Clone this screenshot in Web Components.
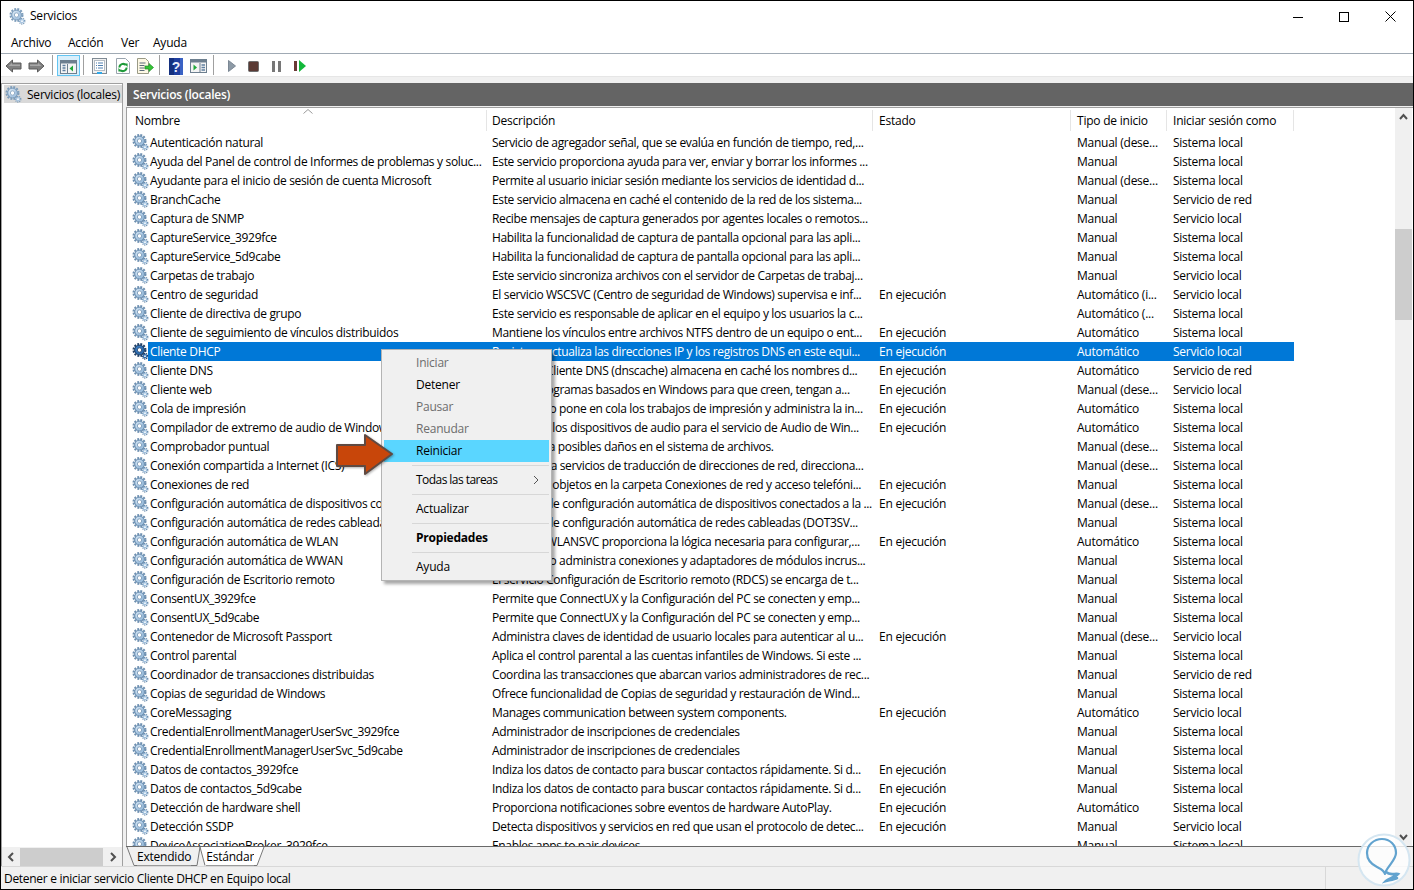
<!DOCTYPE html>
<html lang="es">
<head>
<meta charset="utf-8">
<title>Servicios</title>
<style>
html,body{margin:0;padding:0;background:#fff;}
body{font-family:"Open Sans","Noto Sans",sans-serif;font-size:12px;color:#000;}
</style>
</head>
<body>
<svc-window>
  <svc-titlebar slot="title">Servicios</svc-titlebar>
  <svc-menubar slot="menu"></svc-menubar>
  <svc-toolbar slot="tools"></svc-toolbar>
  <svc-tree slot="tree"></svc-tree>
  <svc-list slot="list"></svc-list>
  <svc-status slot="status">Detener e iniciar servicio Cliente DHCP en Equipo local</svc-status>
  <svc-context slot="over"></svc-context>
  <svc-watermark slot="over"></svc-watermark>
</svc-window>

<script>
//shared font rule, each shadow root needs its own copy
const BASE = `font-family:"Open Sans","Noto Sans",sans-serif;font-size:12px;letter-spacing:-0.22px;color:#000;`;

//the gear used by every service, 3 colour sets
function gear(light, mid, dark){
  return `<svg width="17" height="17" viewBox="0 0 17 17" style="display:block">
    <circle cx="7.5" cy="7" r="5.9" fill="none" stroke="${dark}" stroke-width="2.2" stroke-dasharray="1.9 1.2"/>
    <circle cx="7.5" cy="7" r="4.9" fill="${mid}" stroke="${dark}" stroke-width="1"/>
    <circle cx="6.8" cy="6.3" r="3.2" fill="${light}" opacity=".75"/>
    <circle cx="7.5" cy="7" r="2.2" fill="#fff" stroke="${dark}" stroke-width=".8"/>
    <circle cx="13" cy="13.2" r="2.7" fill="none" stroke="${dark}" stroke-width="1.5" stroke-dasharray="1.1 .8"/>
    <circle cx="13" cy="13.2" r="2.1" fill="${mid}"/>
    <circle cx="13" cy="13.2" r=".9" fill="#fff"/>
  </svg>`;
}
const GEAR = gear("#d3e4f3","#9fc0de","#6d8fb0");
const GEAR_PALE = gear("#dbe8f4","#a9c6e2","#7d9dbb");
const GEAR_SELECTED = gear("#3f7fc4","#2a6aad","#1f3f66");

//all the toolbar icons
const TOOL_ICONS = {
  back:`<svg width="17" height="14" viewBox="0 0 17 14"><path d="M1 7 7.5 1V4H16V10H7.5V13Z" fill="#808080" stroke="#5a5a5a"/><path d="M3.5 7 7 4V5.5H15V7Z" fill="#a8a8a8"/></svg>`,
  forward:`<svg width="17" height="14" viewBox="0 0 17 14"><path d="M16 7 9.5 1V4H1V10H9.5V13Z" fill="#808080" stroke="#5a5a5a"/><path d="M13.5 7 10 4V5.5H2V7Z" fill="#a8a8a8"/></svg>`,
  tree:`<svg width="17" height="14" viewBox="0 0 17 14"><rect x=".5" y=".5" width="16" height="13" fill="#f4f4f4" stroke="#6d7f8f"/><rect x="1" y="1" width="15" height="2.5" fill="#6d7f8f"/><path d="M2.5 5.5h3M2.5 8h3M2.5 10.5h3" stroke="#5f7f9f" stroke-width="1.4"/><path d="M7.5 4v9" stroke="#6d7f8f"/><path d="M13 5.5v6L9.5 8.5Z" fill="#1fa83a"/></svg>`,
  doc:`<svg width="15" height="16" viewBox="0 0 15 16"><rect x=".5" y=".5" width="14" height="15" fill="#f1f1f1" stroke="#7f8a94"/><rect x="2.5" y="2.5" width="10" height="10" fill="#fff" stroke="#b4bcc4"/><path d="M4 5h1M6 5h5M4 7.5h1M6 7.5h5M4 10h1M6 10h5" stroke="#4f7fb0"/><rect x="5" y="14" width="5" height="2" fill="#2ea7e8"/></svg>`,
  refresh:`<svg width="14" height="16" viewBox="0 0 14 16"><path d="M.5.5h9l4 4v11H.5Z" fill="#fff" stroke="#9aa4ae"/><path d="M3.4 9.5a3.7 3.7 0 0 1 6.4-2.4M10.6 9.5a3.7 3.7 0 0 1-6.4 2.4" fill="none" stroke="#1f9a3a" stroke-width="2"/><path d="M8 5.5h3.6v3.6ZM6 13.5H2.4V9.9Z" fill="#1f9a3a"/></svg>`,
  export:`<svg width="17" height="16" viewBox="0 0 17 16"><path d="M.5.5h8l3 3v12H.5Z" fill="#fdf8e4" stroke="#9a9a86"/><path d="M2.5 5h6M2.5 7.5h5M2.5 10h5M2.5 12.5h5" stroke="#5a6a7a"/><path d="M16.5 9.5 12 5.5V8H8v3h4v2.5Z" fill="#35c435" stroke="#1f8f2a" stroke-width=".7"/></svg>`,
  help:`<svg width="14" height="17" viewBox="0 0 14 17"><rect width="14" height="17" fill="#1f3f9f"/><rect width="5" height="17" fill="#14307f"/><rect x="11" width="3" height="17" fill="#3a62c4"/><text x="7" y="13.5" text-anchor="middle" font-family="Liberation Sans,sans-serif" font-weight="700" font-size="14" fill="#e8eefc">?</text></svg>`,
  console:`<svg width="17" height="14" viewBox="0 0 17 14"><rect x=".5" y=".5" width="16" height="13" fill="#f4f4f4" stroke="#6d7f8f"/><rect x="1" y="1" width="15" height="2.5" fill="#6d7f8f"/><path d="M3.5 5.5v6L7 8.5Z" fill="#1fa83a"/><path d="M10 4v9" stroke="#6d7f8f"/><path d="M11.5 6h3.5M11.5 8.5h3.5M11.5 11h3.5" stroke="#5f7f9f" stroke-width="1.4"/></svg>`,
  play:`<svg width="8" height="12" viewBox="0 0 8 12"><path d="M.5.5 7.5 6 .5 11.5Z" fill="#8d9aa6" stroke="#7b8794"/></svg>`,
  stop:`<svg width="11" height="11" viewBox="0 0 11 11"><rect x=".5" y=".5" width="10" height="10" rx="1" fill="#5a3a34" stroke="#6d6d6d"/></svg>`,
  pause:`<svg width="9" height="11" viewBox="0 0 9 11"><rect width="3" height="11" fill="#777"/><rect x="6" width="3" height="11" fill="#777"/></svg>`,
  resume:`<svg width="12" height="12" viewBox="0 0 12 12"><rect y="1" width="3" height="10" fill="#6a3a36"/><path d="M5 0 12 6 5 12Z" fill="#12b83a"/></svg>`
};

//the table content, text is cut by hand as the real list cuts it
const I = "En ejecución", MD = "Manual (dese...", M = "Manual", A = "Automático", SL = "Sistema local", VL = "Servicio local", VR = "Servicio de red";
const ROWS = [
["Autenticación natural","Servicio de agregador señal, que se evalúa en función de tiempo, red,...","",MD,SL],
["Ayuda del Panel de control de Informes de problemas y soluc...","Este servicio proporciona ayuda para ver, enviar y borrar los informes ...","",M,SL],
["Ayudante para el inicio de sesión de cuenta Microsoft","Permite al usuario iniciar sesión mediante los servicios de identidad d...","",MD,SL],
["BranchCache","Este servicio almacena en caché el contenido de la red de los sistema...","",M,VR],
["Captura de SNMP","Recibe mensajes de captura generados por agentes locales o remotos...","",M,VL],
["CaptureService_3929fce","Habilita la funcionalidad de captura de pantalla opcional para las apli...","",M,SL],
["CaptureService_5d9cabe","Habilita la funcionalidad de captura de pantalla opcional para las apli...","",M,SL],
["Carpetas de trabajo","Este servicio sincroniza archivos con el servidor de Carpetas de trabaj...","",M,VL],
["Centro de seguridad","El servicio WSCSVC (Centro de seguridad de Windows) supervisa e inf...",I,"Automático (i...",VL],
["Cliente de directiva de grupo","Este servicio es responsable de aplicar en el equipo y los usuarios la c...","","Automático (...",SL],
["Cliente de seguimiento de vínculos distribuidos","Mantiene los vínculos entre archivos NTFS dentro de un equipo o ent...",I,A,SL],
["Cliente DHCP","Registra y actualiza las direcciones IP y los registros DNS en este equi...",I,A,VL],
["Cliente DNS","El servicio Cliente DNS (dnscache) almacena en caché los nombres d...",I,A,VR],
["Cliente web","Habilita programas basados en Windows para que creen, tengan a...",I,MD,VL],
["Cola de impresión","Este servicio pone en cola los trabajos de impresión y administra la in...",I,A,SL],
["Compilador de extremo de audio de Windows","Administra los dispositivos de audio para el servicio de Audio de Win...",I,A,SL],
["Comprobador puntual","Comprueba posibles daños en el sistema de archivos.","",MD,SL],
["Conexión compartida a Internet (ICS)","Proporciona servicios de traducción de direcciones de red, direcciona...","",MD,SL],
["Conexiones de red","Administra objetos en la carpeta Conexiones de red y acceso telefóni...",I,M,SL],
["Configuración automática de dispositivos conectados","El servicio de configuración automática de dispositivos conectados a la ...",I,MD,SL],
["Configuración automática de redes cableadas","El servicio de configuración automática de redes cableadas (DOT3SV...","",M,SL],
["Configuración automática de WLAN","El servicio WLANSVC proporciona la lógica necesaria para configurar,...",I,A,SL],
["Configuración automática de WWAN","Este servicio administra conexiones y adaptadores de módulos incrus...","",M,SL],
["Configuración de Escritorio remoto","El servicio Configuración de Escritorio remoto (RDCS) se encarga de t...","",M,SL],
["ConsentUX_3929fce","Permite que ConnectUX y la Configuración del PC se conecten y emp...","",M,SL],
["ConsentUX_5d9cabe","Permite que ConnectUX y la Configuración del PC se conecten y emp...","",M,SL],
["Contenedor de Microsoft Passport","Administra claves de identidad de usuario locales para autenticar al u...",I,MD,VL],
["Control parental","Aplica el control parental a las cuentas infantiles de Windows. Si este ...","",M,SL],
["Coordinador de transacciones distribuidas","Coordina las transacciones que abarcan varios administradores de rec...","",M,VR],
["Copias de seguridad de Windows","Ofrece funcionalidad de Copias de seguridad y restauración de Wind...","",M,SL],
["CoreMessaging","Manages communication between system components.",I,A,VL],
["CredentialEnrollmentManagerUserSvc_3929fce","Administrador de inscripciones de credenciales","",M,SL],
["CredentialEnrollmentManagerUserSvc_5d9cabe","Administrador de inscripciones de credenciales","",M,SL],
["Datos de contactos_3929fce","Indiza los datos de contacto para buscar contactos rápidamente. Si d...",I,M,SL],
["Datos de contactos_5d9cabe","Indiza los datos de contacto para buscar contactos rápidamente. Si d...",I,M,SL],
["Detección de hardware shell","Proporciona notificaciones sobre eventos de hardware AutoPlay.",I,A,SL],
["Detección SSDP","Detecta dispositivos y servicios en red que usan el protocolo de detec...",I,M,VL],
["DeviceAssociationBroker_3929fce","Enables apps to pair devices","",M,SL]
];

//MAIN WINDOW
class SvcWindow extends HTMLElement {
  constructor(){
    super();
    this.attachShadow({mode:"open"}).innerHTML = `
    <style>
      :host{display:block;position:relative;width:1414px;height:890px;box-sizing:border-box;border:1px solid #000;background:#fff;overflow:hidden;${BASE}}
      .frame{display:flex;flex-direction:column;height:100%;}
      .console{flex:1;height:0;min-height:0;display:grid;grid-template-columns:122px 1fr;column-gap:3px;background:#f0f0f0;padding-top:6px;border-top:1px solid #e6e6e6;}
    </style>
    <div class="frame">
      <slot name="title"></slot>
      <slot name="menu"></slot>
      <slot name="tools"></slot>
      <div class="console">
        <slot name="tree"></slot>
        <slot name="list"></slot>
      </div>
      <slot name="status"></slot>
    </div>
    <slot name="over"></slot>`;
  }
}

class SvcTitlebar extends HTMLElement {
  constructor(){
    super();
    this.attachShadow({mode:"open"}).innerHTML = `
    <style>
      :host{display:flex;align-items:center;height:31px;flex:none;${BASE}}
      .ico{margin:0 4px 0 8px;width:17px;}
      .txt{flex:1;margin-bottom:2px;}
      .btn{width:46px;height:31px;display:flex;align-items:center;justify-content:center;}
    </style>
    <span class="ico">${GEAR_PALE}</span>
    <span class="txt"><slot></slot></span>
    <span class="btn"><svg width="10" height="10"><path d="M0 5.5h10" stroke="#000"/></svg></span>
    <span class="btn"><svg width="10" height="10"><rect x=".5" y=".5" width="9" height="9" fill="none" stroke="#000"/></svg></span>
    <span class="btn"><svg width="11" height="11"><path d="M.5.5l10 10M10.5.5l-10 10" stroke="#000" fill="none"/></svg></span>`;
  }
}

class SvcMenubar extends HTMLElement {
  constructor(){
    super();
    this.attachShadow({mode:"open"}).innerHTML = `
    <style>
      :host{display:flex;align-items:center;height:21px;flex:none;border-bottom:1px solid #a0aab4;padding-left:10px;${BASE}}
      span{display:block;margin-top:-1px;}
    </style>
    <span style="width:57px">Archivo</span>
    <span style="width:53px">Acción</span>
    <span style="width:32px">Ver</span>
    <span>Ayuda</span>`;
  }
}

//one toolbar button, icon attribute picks from TOOL_ICONS
class SvcTool extends HTMLElement {
  constructor(){
    super();
    this.attachShadow({mode:"open"});
  }
  connectedCallback(){
    this.shadowRoot.innerHTML = `
    <style>
      :host{display:flex;align-items:center;justify-content:center;width:23px;height:21px;box-sizing:border-box;flex:none;padding-top:2px;}
      :host([active]){background:#d9effb;border:1px solid #63c5f2;padding-top:3px;}
      svg{display:block;}
    </style>${TOOL_ICONS[this.getAttribute("icon")]}`;
  }
}

class SvcSep extends HTMLElement {
  constructor(){
    super();
    this.attachShadow({mode:"open"}).innerHTML = `
    <style>:host{display:block;width:1px;height:20px;background:#a0a0a0;flex:none;}</style>`;
  }
}

class SvcToolbar extends HTMLElement {
  constructor(){
    super();
    this.attachShadow({mode:"open"}).innerHTML = `
    <style>:host{display:flex;align-items:center;height:22px;flex:none;padding-left:1px;background:#fff;}</style>
    <svc-tool icon="back"></svc-tool>
    <svc-tool icon="forward"></svc-tool>
    <svc-sep style="margin:0 4px"></svc-sep>
    <svc-tool icon="tree" active></svc-tool>
    <svc-sep style="margin:0 4px 0 3px"></svc-sep>
    <svc-tool icon="doc"></svc-tool>
    <svc-tool icon="refresh"></svc-tool>
    <svc-tool icon="export"></svc-tool>
    <svc-sep style="margin:0 4px 0 2px"></svc-sep>
    <svc-tool icon="help"></svc-tool>
    <svc-tool icon="console"></svc-tool>
    <svc-sep style="margin:0 6px 0 3px"></svc-sep>
    <svc-tool icon="play"></svc-tool>
    <svc-tool icon="stop" style="margin-left:-1px"></svc-tool>
    <svc-tool icon="pause"></svc-tool>
    <svc-tool icon="resume"></svc-tool>`;
  }
}

//horizontal scrollbar under the tree
class SvcTree extends HTMLElement {
  constructor(){
    super();
    this.attachShadow({mode:"open"}).innerHTML = `
    <style>
      :host{display:flex;flex-direction:column;height:100%;box-sizing:border-box;background:#fff;border:1px solid #a0a0a0;border-bottom:0;${BASE}}
      .item{display:flex;align-items:center;height:18px;margin:1px 0 0 2px;background:#d9d9d9;white-space:nowrap;overflow:hidden;}
      .item span{display:block;flex:none;}
      .ico{margin:0 5px 0 1px;}
      .fill{flex:1;}
      .bar{height:19px;background:#f0f0f0;display:flex;align-items:center;}
      .arr{width:18px;display:flex;justify-content:center;}
      .thumb{width:83px;height:18px;background:#cdcdcd;}
      .sp{flex:1;}
    </style>
    <div class="item"><span class="ico">${GEAR_PALE}</span><span>Servicios (locales)</span></div>
    <div class="fill"></div>
    <div class="bar">
      <span class="arr"><svg width="8" height="10"><path d="M6 1 2 5l4 4" fill="none" stroke="#505050" stroke-width="2"/></svg></span>
      <span class="thumb"></span>
      <span class="sp"></span>
      <span class="arr"><svg width="8" height="10"><path d="M2 1l4 4-4 4" fill="none" stroke="#505050" stroke-width="2"/></svg></span>
    </div>`;
  }
}

//one line of the service list
class SvcRow extends HTMLElement {
  constructor(){
    super();
    this.attachShadow({mode:"open"});
  }
  connectedCallback(){
    const sel = this.hasAttribute("selected");
    const cell = n => this.getAttribute(n) || "";
    this.shadowRoot.innerHTML = `
    <style>
      :host{display:grid;grid-template-columns:21px 342px 387px 198px 96px 123px;height:19px;flex:none;line-height:19px;${BASE}}
      .ico{padding:1px 0 0 5px;}
      .c{padding-left:2px;white-space:nowrap;overflow:hidden;}
      .n{letter-spacing:-0.32px;}
      .d{letter-spacing:-0.35px;}
      .s{letter-spacing:-0.25px;}
      :host([selected]) .c{background:#0078d7;color:#fff;}
    </style>
    <div class="ico">${sel ? GEAR_SELECTED : GEAR}</div>
    <div class="c n">${cell("name")}</div>
    <div class="c d">${cell("desc")}</div>
    <div class="c s">${cell("state")}</div>
    <div class="c s">${cell("start")}</div>
    <div class="c s">${cell("logon")}</div>`;
  }
}

//right pane: dark caption, column headers, rows, scrollbar, tabs
class SvcList extends HTMLElement {
  constructor(){
    super();
    const rows = ROWS.map((r,i) => {
      return `<svc-row ${i==11?"selected":""} name="${r[0]}" desc="${r[1]}" state="${r[2]}" start="${r[3]}" logon="${r[4]}"></svc-row>`;
    }).join("");
    this.attachShadow({mode:"open"}).innerHTML = `
    <style>
      :host{display:flex;flex-direction:column;height:100%;min-height:0;${BASE}}
      .cap{height:23px;flex:none;background:#646464;color:#fff;font-weight:600;line-height:23px;padding-left:6px;margin-left:1px;margin-bottom:1px;}
      .body{flex:1;min-height:0;display:flex;background:#fff;border:1px solid #a0a0a0;border-bottom:0;border-right:0;}
      .table{flex:1;min-width:0;display:flex;flex-direction:column;overflow:hidden;}
      .head{display:grid;grid-template-columns:360px 386px 198px 96px 127px;height:23px;padding-top:2px;flex:none;position:relative;}
      .head div{border-right:1px solid #e5e5e5;padding-left:6px;line-height:21px;height:21px;}
      .head div:first-child{padding-left:8px;}
      .head div:nth-child(2){padding-left:5px;}
      .caret{position:absolute;left:176px;top:1px;}
      .rows{flex:1;min-height:0;overflow:hidden;display:flex;flex-direction:column;}
      .sb{width:17px;flex:none;background:#f0f0f0;display:flex;flex-direction:column;margin-right:1px;}
      .sb span{display:flex;height:17px;align-items:center;justify-content:center;flex:none;}
      .thumb{height:91px;background:#cdcdcd;margin-top:104px;flex:none;}
      .grow{flex:1;}
      .tabs{height:19px;flex:none;border-top:1px solid #696969;display:flex;background:#f0f0f0;}
      .tabs svg{display:block;flex:none;}
      .tab{line-height:20px;height:18px;flex:none;border-bottom:1px solid #9a9a9a;}
      .on{background:#fff;}
    </style>
    <div class="cap">Servicios (locales)</div>
    <div class="body">
      <div class="table">
        <div class="head">
          <div>Nombre<svg class="caret" width="10" height="5"><path d="M.5 4.5 5 .5l4.5 4" fill="none" stroke="#9a9a9a"/></svg></div>
          <div>Descripción</div><div>Estado</div><div>Tipo de inicio</div><div>Iniciar sesión como</div>
        </div>
        <div class="rows">${rows}</div>
      </div>
      <div class="sb">
        <span><svg width="9" height="7"><path d="M1 6l3.5-4L8 6" fill="none" stroke="#505050" stroke-width="2"/></svg></span>
        <div class="thumb"></div>
        <div class="grow"></div>
        <span><svg width="9" height="7"><path d="M1 1l3.5 4L8 1" fill="none" stroke="#505050" stroke-width="2"/></svg></span>
      </div>
    </div>
    <div class="tabs">
      <svg width="11" height="19"><path d="M1 0l7 18.5H11" stroke="#777" fill="none"/></svg>
      <span class="tab">Extendido</span>
      <svg width="15" height="19"><path d="M9 0H15V18.5H14Z" fill="#fff"/><path d="M0 18.5H6L9 0l5 18.5" stroke="#777" fill="none"/></svg>
      <span class="tab on">Estándar</span>
      <svg width="11" height="19"><path d="M0 0H10L3 18.5H0Z" fill="#fff"/><path d="M10 0 3 18.5H0" stroke="#777" fill="none"/></svg>
    </div>`;
  }
}

class SvcStatus extends HTMLElement {
  constructor(){
    super();
    this.attachShadow({mode:"open"}).innerHTML = `
    <style>
      :host{display:flex;height:23px;flex:none;background:#f0f0f0;border-top:1px solid #d8d8d8;box-sizing:border-box;line-height:23px;${BASE}}
      .t{flex:1;padding-left:3px;letter-spacing:-0.3px;}
      .s{width:87px;border-left:1px solid #d8d8d8;}
    </style>
    <div class="t"><slot></slot></div><div class="s"></div>`;
  }
}

//context menu with the orange arrow pointing at it
class SvcContext extends HTMLElement {
  constructor(){
    super();
    this.attachShadow({mode:"open"}).innerHTML = `
    <style>
      :host{display:block;position:absolute;left:380px;top:348px;width:171px;box-sizing:border-box;background:#f0f0f0;border:1px solid #b4b4b4;padding:2px;box-shadow:3px 3px 3px rgba(0,0,0,.35);${BASE}}
      .i{height:22px;line-height:22px;padding-left:32px;position:relative;}
      .off{color:#6d6d6d;}
      .hi{background:#5ad6ff;}
      .b{font-weight:700;}
      .t{letter-spacing:-0.55px;}
      .sep{height:7px;display:flex;align-items:center;padding-left:28px;}
      .sep::after{content:"";display:block;flex:1;height:1px;background:#d7d7d7;}
      .chev{position:absolute;right:10px;top:6px;}
      .arrow{position:absolute;left:-47px;top:83px;filter:drop-shadow(1px 1px 1px rgba(0,0,0,.3));}
    </style>
    <div class="i off">Iniciar</div>
    <div class="i">Detener</div>
    <div class="i off">Pausar</div>
    <div class="i off">Reanudar</div>
    <div class="i hi">Reiniciar</div>
    <div class="sep"></div>
    <div class="i"><span class="t">Todas las tareas</span><svg class="chev" width="6" height="10"><path d="M1 1l4 4-4 4" fill="none" stroke="#555"/></svg></div>
    <div class="sep"></div>
    <div class="i">Actualizar</div>
    <div class="sep"></div>
    <div class="i b">Propiedades</div>
    <div class="sep"></div>
    <div class="i">Ayuda</div>
    <svg class="arrow" width="60" height="44" viewBox="0 0 60 44"><path d="M2 12H30V2L57 21 30 41V33H2Z" fill="#c8460a" stroke="#5f4a42" stroke-width="2" stroke-linejoin="round"/></svg>`;
  }
}

//round site mark in the bottom right corner
class SvcWatermark extends HTMLElement {
  constructor(){
    super();
    this.attachShadow({mode:"open"}).innerHTML = `
    <style>:host{display:block;position:absolute;left:1356px;top:832px;width:54px;height:54px;}svg{display:block;}</style>
    <svg width="54" height="54" viewBox="0 0 54 54">
      <circle cx="27" cy="27" r="25.5" fill="#fff" fill-opacity=".8" stroke="#d5e6f1" stroke-width="2"/>
      <path d="M28 41C27 37 24 36 20 34 14 31 10 26 10 20 10 12 17 6 25 6 33 6 39 12 39 20 39 26 33 31 29 38" fill="none" stroke="#62a3cf" stroke-width="2.2" stroke-linecap="round"/>
      <path d="M29 39C33 43 38 40 41 41 38 44 31 46 29 48 33 47 38 46 40 45" fill="none" stroke="#62a3cf" stroke-width="2.6" stroke-linecap="round"/>
    </svg>`;
  }
}

//MUST HAVE - define children before parents, no delay
customElements.define("svc-tool", SvcTool);
customElements.define("svc-sep", SvcSep);
customElements.define("svc-row", SvcRow);
customElements.define("svc-titlebar", SvcTitlebar);
customElements.define("svc-menubar", SvcMenubar);
customElements.define("svc-toolbar", SvcToolbar);
customElements.define("svc-tree", SvcTree);
customElements.define("svc-list", SvcList);
customElements.define("svc-status", SvcStatus);
customElements.define("svc-context", SvcContext);
customElements.define("svc-watermark", SvcWatermark);
customElements.define("svc-window", SvcWindow);
</script>
</body>
</html>
